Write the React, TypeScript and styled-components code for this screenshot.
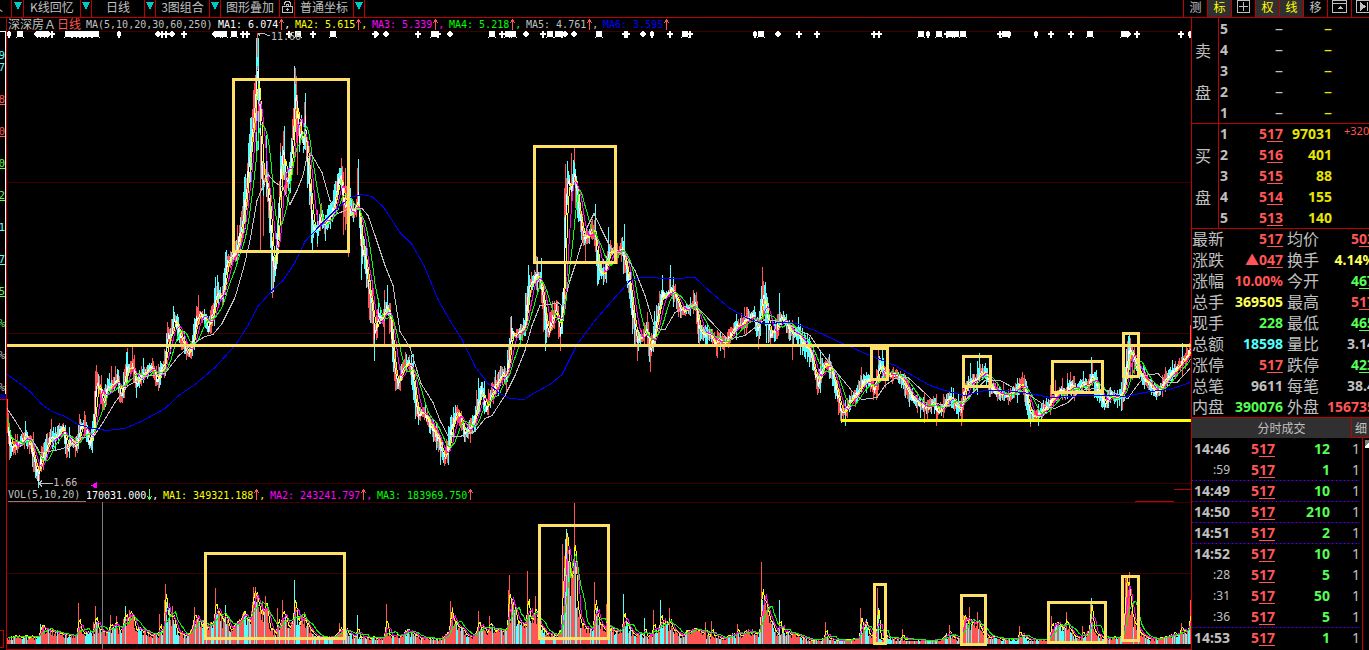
import React from "react";
import styled, { createGlobalStyle, css } from "styled-components";

const C = {
  line: "#c00000",
  grid: "#400000",
  gray: "#c0c0c0",
  red: "#ff5555",
  cyan: "#55ffff",
  green: "#55ff55",
  lime: "#00ff00",
  yellow: "#ffff00",
  lemon: "#ffff55",
  magenta: "#ff00ff",
  blue: "#0000ff",
  white: "#ffffff",
  note: "#ffe066",
};

const cjk = `"Noto Sans CJK SC", sans-serif`;
const digits = `"Noto Sans", "Noto Sans CJK SC", sans-serif`;
const mono = `"DejaVu Sans Mono", "Noto Sans CJK SC", monospace`;

const Global = createGlobalStyle`
  *, *::before, *::after { box-sizing: border-box; }
  body { margin: 0; background: #000; color: ${C.gray}; font-family: ${cjk}; overflow: hidden; }
  button { font: inherit; color: inherit; background: none; border: 0; padding: 0; margin: 0; }
`;

/* ---------- layout ---------- */

const Page = styled.div`
  display: flex;
  flex-direction: column;
  height: 100vh;
  background: #000;
`;

const Toolbar = styled.header`
  display: flex;
  justify-content: space-between;
  flex: none;
  height: 18px;
  border-bottom: 1px solid ${C.line};
  font-size: 12px;
  line-height: 14px;
`;

const ToolGroup = styled.div<{ $width?: number }>`
  display: flex;
  flex: none;
  ${(p) => p.$width && css`width: ${p.$width}px; overflow: hidden;`}
`;

const MenuButton = styled.button<{ $width: number }>`
  display: flex;
  flex: none;
  justify-content: center;
  width: ${(p) => p.$width}px;
  height: 17px;
  border-right: 1px solid ${C.line};
  white-space: nowrap;
`;

const ScrolledButton = styled(MenuButton)`
  justify-content: flex-start;
  text-indent: -9px;
`;

const ArrowButton = styled(MenuButton)`
  padding-top: 2px;
  svg { display: block; }
`;

const ToggleButton = styled.button<{ $on?: boolean }>`
  display: flex;
  flex: none;
  justify-content: center;
  width: 24px;
  height: 17px;
  border-left: 1px solid ${C.line};
  color: ${(p) => (p.$on ? C.yellow : C.gray)};
  background: ${(p) => (p.$on ? "#303030" : "#000")};
`;

const Main = styled.main`
  display: flex;
  flex: 1;
  min-height: 0;
`;

const Axis = styled.aside`
  display: flex;
  flex-direction: column;
  flex: none;
  width: 7px;
  padding-top: 13px;
  border-right: 1px solid ${C.line};
`;

const Scale = styled.div`
  flex: none;
  width: 6px;
  height: 363px;
  padding-top: 17px;
  border-top: 1px solid ${C.white};
  border-right: 1px solid ${C.white};
  overflow: hidden;
`;

const ScaleMark = styled.div<{ $color: string; $tall?: boolean; $line?: boolean }>`
  display: flex;
  justify-content: flex-end;
  height: ${(p) => (p.$tall ? 32 : 12)}px;
  font: 11px/14px ${mono};
  color: ${(p) => p.$color};
  text-decoration: ${(p) => (p.$line ? "underline" : "none")};
`;

const ScaleGap = styled.div`
  height: 20px;
`;

const ScaleEnd = styled.div`
  width: 6px;
  height: 6px;
  background: #000080;
  border-bottom: 1px solid ${C.line};
`;

const AxisFoot = styled.div`
  width: 4px;
  height: 18px;
  margin: auto 0 2px;
  border: 1px solid ${C.line};
  border-left: 0;
`;

const Charts = styled.section`
  display: flex;
  flex-direction: column;
  flex: 1;
  min-width: 0;
`;

const Legend = styled.div<{ $height: number }>`
  display: flex;
  flex: none;
  height: ${(p) => p.$height}px;
  padding-left: 1px;
  font: 10px/13px ${mono};
  white-space: pre;
`;

const StockName = styled.span<{ $color?: string; $width: number }>`
  flex: none;
  width: ${(p) => p.$width}px;
  font: 12px/12px ${cjk};
  color: ${(p) => p.$color ?? C.gray};
`;

const LegendItem = styled.span<{ $color: string; $width: number; $low?: boolean }>`
  display: flex;
  flex: none;
  width: ${(p) => p.$width}px;
  line-height: ${(p) => (p.$low ? 15 : 13)}px;
  color: ${(p) => p.$color};
`;

const TrendMark = styled.svg`
  flex: none;
  display: block;
  width: 6px;
  height: 12px;
  margin-top: 1px;
`;

const VolLabel = styled.span`
  flex: none;
  width: 78px;
  border-bottom: 1px solid #808080;
  line-height: 13px;
`;

const Pane = styled.div<{ $grow: number }>`
  position: relative;
  flex: ${(p) => p.$grow} 1 0;
  min-height: 0;
  svg.plot { display: block; width: 100%; height: 100%; }
`;

const Callout = styled.span<{ $left: string; $top: string }>`
  position: absolute;
  left: ${(p) => p.$left};
  top: ${(p) => p.$top};
  display: flex;
  align-items: center;
  font: 10px/12px ${mono};
  color: ${C.gray};
`;

/* ---------- side panel ---------- */

const Side = styled.aside`
  display: flex;
  flex-direction: column;
  flex: none;
  width: 178px;
  border-left: 1px solid ${C.line};
  overflow: hidden;
`;

const Block = styled.section`
  display: flex;
  flex: none;
  box-shadow: 0 1px 0 ${C.line};
`;

const BookLabel = styled.div`
  display: flex;
  flex-direction: column;
  justify-content: center;
  gap: 18px;
  flex: none;
  width: 27px;
  padding-left: 3px;
  border-right: 1px solid ${C.line};
  font-size: 16px;
  line-height: 24px;
`;

const Table = styled.table`
  flex: none;
  table-layout: fixed;
  border-collapse: collapse;
  font: bold 14px/21px ${digits};
  td, th { padding: 0; height: 21px; white-space: nowrap; }
`;

const Num = styled.td<{ $color?: string; $width: number; $thin?: boolean }>`
  width: ${(p) => p.$width}px;
  color: ${(p) => p.$color ?? C.gray};
  text-align: right;
  ${(p) => p.$thin && css`font-weight: normal;`}
  u { text-decoration-thickness: 1px; text-underline-offset: 2px; }
`;

const Dash = styled(Num)`
  font-size: 16px;
`;

const Level = styled.th<{ $width: number }>`
  width: ${(p) => p.$width}px;
  padding-left: 1px !important;
  text-align: left;
`;

const Delta = styled.td`
  width: 50px;
  padding-left: 12px !important;
  font: 11px/16px ${digits};
  vertical-align: top;
  color: ${C.red};
`;

const Name = styled.th<{ $indent?: boolean }>`
  width: ${(p) => (p.$indent ? 36 : 32)}px;
  padding-left: ${(p) => (p.$indent ? 4 : 0)}px !important;
  font: 16px/21px ${cjk};
  text-align: left;
`;

const TickHead = styled.div`
  display: flex;
  flex: none;
  height: 21px;
  border-top: 1px solid ${C.line};
  background: #303030;
  font-size: 12px;
  line-height: 19px;
`;

const TickTitle = styled.h2`
  flex: 1;
  margin: 0;
  padding-left: 20px;
  font-size: 12px;
  font-weight: normal;
  text-align: center;
`;

const DetailButton = styled.button`
  width: 18px;
  padding-left: 3px;
  border-left: 1px solid ${C.line};
  border-bottom: 1px solid ${C.line};
  text-align: left;
`;

const TickBody = styled.div`
  display: flex;
  flex: 1;
  min-height: 0;
  overflow: hidden;
`;

const TickRow = styled.tr<{ $rule?: boolean }>`
  ${(p) =>
    p.$rule &&
    css`
      background: repeating-linear-gradient(90deg, ${C.line} 0 1px, #0000a0 1px 4px) top / 100% 1px no-repeat;
    `}
`;

const Time = styled.td<{ $minor?: boolean }>`
  width: 38px;
  text-align: right;
  ${(p) => p.$minor && css`font-weight: normal; font-size: 12px;`}
`;

const Scroll = styled.div`
  flex: none;
  width: 7px;
  margin-left: 2px;
  padding: 2px 0 0 2px;
  border-left: 1px solid ${C.line};
  &::before { content: ""; display: block; height: 8px; background: linear-gradient(135deg, #808080 50%, #fff 50%); }
`;

/* ---------- chart data ---------- */

type Pt = [number, number];

const parse = (s: string): Pt[] =>
  s.trim().split(/\s+/).map((p) => p.split(",").map(Number) as Pt);

const sample = (pts: Pt[], x: number) => {
  for (let i = 1; i < pts.length; i++) {
    if (x <= pts[i][0]) {
      const [a, b] = [pts[i - 1], pts[i]];
      return a[1] + ((b[1] - a[1]) * (x - a[0])) / (b[0] - a[0]);
    }
  }
  return pts[pts.length - 1][1];
};

const random = (seed: number) => () => {
  seed = (seed * 1664525 + 1013904223) % 4294967296;
  return seed / 4294967296;
};

const X0 = 7;
const X1 = 1191;

const price = parse(`
7,420 9,440 11,450 15,445 20,444 25,436 30,445 33,455 35,468 38,478 40,462 45,450 50,437 55,438 60,430 63,428
67,450 70,440 76,446 80,427 85,425 89,445 93,432 96,380 100,390 103,405 107,388 112,385 117,378 121,397 126,370
132,366 136,384 141,376 147,370 152,368 157,382 161,370 165,362 167,335 170,338 174,318 178,330 183,343 188,355
193,340 196,320 200,315 205,318 208,330 212,315 217,292 222,298 226,265 230,260 235,252 240,234 245,200 249,155
252,128 255,100 257,62 259,100 261,170 263,190 265,175 268,195 271,240 273,270 275,265 277,240 280,175 283,145
286,185 290,170 293,125 295,90 297,112 299,140 301,125 303,150 305,120 307,165 310,195 312,230 315,228 318,230
321,213 324,228 328,217 332,212 336,192 340,172 344,205 346,202 348,228 350,205 354,212 358,198 361,250 365,255
368,290 372,310 374,335 378,315 382,320 386,307 390,315 392,350 395,375 398,385 402,368 408,362 412,372 415,400
418,415 424,412 428,423 433,430 438,440 441,450 444,460 448,445 452,425 456,412 460,418 465,435 470,428 474,420
478,403 481,388 486,410 490,395 494,388 498,382 502,372 506,378 509,350 511,332 515,335 520,332 525,325 528,285
532,282 537,274 541,285 545,320 548,333 551,322 556,307 560,333 563,300 564,240 566,190 568,178 571,190 574,170
577,200 580,220 584,240 588,236 592,230 595,235 597,265 600,273 605,273 608,252 614,251 618,253 622,247 625,265
629,285 633,320 637,340 642,337 646,327 650,350 654,335 658,312 662,294 666,296 670,290 675,294 680,310 685,310
690,307 695,303 699,330 704,335 710,335 715,343 720,338 724,345 730,335 736,325 742,325 748,317 753,314 758,333
761,305 763,290 766,312 770,335 775,332 780,316 785,322 790,332 794,335 798,332 800,338 805,347 810,352 814,370
818,385 822,367 828,364 832,375 836,390 841,412 845,412 850,400 856,395 862,382 868,380 874,390 877,378 879,366
882,366 885,375 890,375 896,375 902,380 908,392 914,400 920,405 926,408 932,402 938,412 944,405 950,397 955,405
961,410 964,390 970,382 976,380 980,372 985,372 990,385 996,393 1002,395 1010,395 1016,390 1022,382 1026,395
1030,415 1035,415 1040,412 1046,408 1052,400 1056,395 1060,391 1065,394 1070,384 1076,390 1083,383 1088,386
1092,376 1096,385 1100,395 1105,405 1110,395 1116,398 1122,395 1126,370 1129,348 1133,357 1138,370 1143,378
1150,385 1156,392 1162,385 1168,377 1175,370 1182,362 1190,350`);

const ma5 = parse(`
7,408 15,420 25,436 32,439 40,452 55,450 70,446 80,437 93,437 103,422 115,402 128,385 145,376 165,373 178,356
190,345 205,336 213,334 222,323 235,297 244,266 250,240 257,200 262,188 268,174 275,182 283,187 290,204 297,190
303,175 307,156 312,155 322,172 330,200 338,213 350,208 362,208 368,215 375,235 385,265 393,285 400,331 410,347
421,383 433,402 440,420 448,435 460,436 475,431 485,418 492,415 505,395 515,375 525,350 532,325 540,305 550,304
558,302 563,306 570,280 575,265 580,248 588,225 594,213 602,230 612,250 625,254 635,270 645,295 655,328 665,329
675,312 685,306 695,304 710,320 728,339 745,335 765,319 785,322 800,330 810,335 820,350 835,370 855,394 862,399
877,397 885,385 895,378 908,377 920,388 935,402 945,406 955,403 965,400 975,390 985,380 1000,380 1015,388
1030,395 1045,405 1055,408 1068,402 1080,390 1095,388 1110,390 1120,396 1128,398 1135,388 1145,375 1158,373
1166,382 1177,382 1190,368`);

const ma6 = parse(`
7,374 20,383 30,391 42,404 52,411 65,416 78,424 93,428 107,430 125,428 145,419 165,408 180,394 195,384 215,367
235,345 248,325 258,306 272,290 283,280 295,262 305,241 320,225 335,210 350,197 361,194 372,196 383,206 400,232
412,244 424,265 438,299 450,320 462,339 475,366 488,383 500,393 510,398 524,399 535,392 550,384 562,374 577,344
595,320 615,297 630,280 640,277 675,278 695,277 710,291 730,308 748,318 762,323 793,322 815,330 838,341 870,355
895,365 930,385 945,390 965,395 985,390 1005,390 1030,393 1050,397 1085,395 1115,395 1125,396 1150,391 1170,389
1190,382`);

/* x, high, low, rising */
const priceSpikes: [number, number, number, boolean][] = [
  [51, 419, 440, true], [79, 414, 440, true], [95, 371, 420, true], [111, 366, 392, true], [127, 348, 376, true],
  [132, 346, 372, true], [173, 306, 325, false], [198, 295, 325, true], [217, 275, 300, false], [250, 118, 190, false],
  [251, 117, 170, false], [255, 75, 130, true], [256, 38, 160, false], [257, 33, 70, true], [258, 38, 150, false],
  [260, 110, 250, true], [263, 150, 236, true], [266, 135, 190, false], [272, 240, 298, true], [271, 230, 293, false],
  [280, 143, 200, true], [283, 131, 180, true], [284, 126, 180, false], [291, 145, 180, false], [294, 66, 140, false],
  [295, 68, 120, true], [296, 76, 140, true], [297, 95, 175, true], [304, 102, 145, true], [305, 93, 150, false],
  [311, 190, 243, false], [312, 210, 248, false], [317, 210, 247, true], [325, 215, 241, false], [341, 158, 190, true],
  [343, 172, 235, true], [345, 168, 230, true], [348, 180, 257, true], [357, 168, 210, true], [358, 159, 210, false],
  [361, 220, 280, false], [374, 325, 361, false], [384, 290, 346, true], [387, 285, 310, false], [444, 450, 466, true],
  [478, 378, 410, false], [481, 382, 400, false], [502, 367, 385, true], [510, 317, 345, true], [528, 265, 300, false],
  [536, 256, 290, true], [537, 257, 295, false], [541, 258, 290, false], [545, 310, 351, false], [560, 330, 351, true],
  [564, 188, 300, true], [565, 164, 240, true], [567, 176, 205, false], [571, 153, 200, true], [573, 160, 190, false],
  [574, 148, 185, true], [575, 182, 208, true], [585, 240, 261, true], [595, 204, 240, false], [597, 250, 285, false],
  [608, 227, 258, false], [621, 238, 262, true], [624, 224, 260, false], [637, 330, 361, true], [650, 340, 372, true],
  [654, 311, 345, false], [662, 275, 300, false], [670, 265, 292, false], [694, 293, 310, false], [698, 310, 343, false],
  [762, 267, 310, true], [763, 281, 320, true], [766, 293, 343, false], [779, 293, 325, false], [792, 320, 360, true],
  [817, 375, 395, true], [861, 367, 384, true], [878, 350, 390, true], [882, 349, 380, false], [970, 363, 385, false],
  [979, 353, 382, false], [1030, 400, 427, true], [1055, 380, 400, true], [1067, 373, 392, true], [1083, 371, 388, false],
  [1091, 357, 384, false], [1092, 362, 386, true], [1128, 336, 380, false], [1129, 334, 370, false], [1130, 338, 375, true],
  [1132, 345, 380, true], [1182, 343, 365, false], [1190, 325, 352, true],
];

const volume = parse(`
7,6 30,6 38,6 40,17 45,13 52,12 60,10 75,6 79,16 88,8 93,12 96,18 100,12 108,10 113,14 120,13 125,24 132,24 138,12
146,12 150,9 158,8 163,12 165,34 170,24 178,9 188,7 194,20 200,22 206,12 212,20 218,25 224,22 230,14 238,18 244,24
250,28 256,36 260,32 266,30 270,16 276,10 284,22 290,20 295,26 302,22 308,15 314,6 330,6 345,12 352,7 370,5 383,5
386,14 390,8 400,8 408,12 418,5 440,4 447,10 450,20 456,18 462,12 468,5 474,8 480,16 488,12 496,16 504,12 508,18
512,34 518,20 524,15 530,28 538,20 545,10 556,7 562,18 564,60 566,90 570,55 574,62 577,40 580,20 585,14 592,16
596,28 600,18 606,12 612,12 620,11 626,18 632,10 640,8 650,7 660,16 664,20 670,14 680,8 690,12 698,10 710,6 716,8
722,4 732,8 740,8 750,12 758,8 761,28 765,40 770,20 776,10 784,12 790,9 800,6 812,2 825,6 833,3 845,2 860,5 866,22
868,10 878,4 890,6 900,3 930,2 940,3 946,8 952,6 960,4 963,26 970,18 978,20 984,10 990,6 1000,4 1015,4 1020,8 1028,3
1048,3 1052,20 1060,16 1068,14 1076,5 1086,6 1091,25 1096,8 1105,4 1112,5 1122,8 1126,40 1130,34 1134,18 1140,10
1150,4 1165,6 1175,9 1190,14`);

const volumeSpikes: [number, number, boolean][] = [
  [78, 41, true], [93, 22, true], [95, 38, true], [110, 29, true], [116, 28, true], [125, 38, false], [131, 26, true],
  [159, 30, true], [164, 44, true], [165, 60, true], [172, 38, true], [194, 37, true], [215, 56, true], [225, 39, false],
  [243, 32, true], [253, 57, true], [255, 57, true], [265, 48, true], [282, 44, true], [277, 36, true], [294, 64, false],
  [295, 37, true], [304, 32, true], [339, 21, true], [357, 29, false], [386, 40, true], [450, 43, true], [452, 37, true],
  [478, 33, true], [489, 28, true], [508, 54, true], [509, 69, true], [515, 40, true], [527, 73, true], [535, 48, true],
  [562, 100, true], [565, 105, false], [564, 88, true], [571, 75, true], [574, 141, true], [575, 82, false],
  [594, 62, true], [606, 40, true], [623, 50, false], [644, 26, false], [653, 34, true], [660, 44, false], [669, 36, true],
  [711, 23, true], [761, 82, true], [762, 44, false], [779, 44, false], [705, 22, true], [737, 20, true], [825, 22, true],
  [860, 36, true], [861, 26, false], [877, 56, true], [878, 36, false], [902, 15, true], [949, 19, true], [963, 29, true],
  [969, 37, true], [977, 32, true], [1019, 18, true], [1051, 28, true], [1066, 32, true], [1082, 18, true],
  [1090, 42, true], [1091, 46, false], [1125, 66, true], [1126, 66, true], [1127, 62, true], [1129, 72, true],
  [1181, 21, true], [1189, 22, false], [1190, 44, true],
];

const average = (values: number[], n: number) =>
  values.map((_, i) => {
    const part = values.slice(Math.max(0, i - n + 1), i + 1);
    return part.reduce((a, b) => a + b, 0) / part.length;
  });

const linePath = (values: number[]) =>
  values.map((v, i) => `${i ? "L" : "M"}${X0 + i + 0.5} ${v.toFixed(1)}`).join("");

const ptsPath = (pts: Pt[]) => pts.map(([x, y], i) => `${i ? "L" : "M"}${x} ${y + 0.5}`).join("");

const bar = (x: number, top: number, bottom: number) =>
  `M${x + 0.5} ${top.toFixed(0)}V${bottom.toFixed(0)}`;

const buildPrice = () => {
  const rnd = random(17);
  const closes: number[] = [];
  let up = "";
  let down = "";
  let body = "";
  let rising = true;
  for (let x = X0; x < X1; x++) {
    const mid = sample(price, x);
    const slope = Math.abs(sample(price, x + 2) - sample(price, x - 2));
    const reach = 4 + Math.min(slope * 0.4, 12);
    const wild = rnd() > 0.75 ? 9 : 0;
    const high = mid - reach * (0.5 + rnd()) - wild * rnd();
    const low = mid + reach * (0.5 + rnd()) + wild * rnd();
    if (rnd() > 0.6) rising = !rising;
    if (rising) up += bar(x, high, low);
    else down += bar(x, high, low);
    if (rnd() > 0.75) body += bar(x, mid - reach * 0.4, mid + reach * 0.4);
    closes.push(mid + (rnd() - 0.5) * 6);
  }
  priceSpikes.forEach(([x, a, b, r]) => {
    if (r) up += bar(x, a, b);
    else down += bar(x, a, b);
  });
  return { up, down, body, closes };
};

const BASE = 644;

const buildVolume = () => {
  const rnd = random(91);
  const heights: number[] = [];
  const colors: boolean[] = [];
  let rising = true;
  for (let x = X0; x < X1; x++) {
    if (rnd() > (rising ? 0.7 : 0.45)) rising = !rising;
    heights.push(Math.max(3, sample(volume, x) * (0.7 + rnd() * 0.7)));
    colors.push(rising);
  }
  volumeSpikes.forEach(([x, h, r]) => {
    heights[x - X0] = h;
    colors[x - X0] = r;
  });
  let up = "";
  let down = "";
  heights.forEach((h, i) => {
    if (colors[i]) up += bar(X0 + i, BASE - h, BASE);
    else down += bar(X0 + i, BASE - h, BASE);
  });
  const line = (n: number) => linePath(average(heights, n).map((h) => BASE - h - 1));
  return { up, down, fast: line(3), mid: line(6), slow: line(12) };
};

const P = buildPrice();
const V = buildVolume();

/* event markers: p plus, d diamond, b burst, n narrow diamond */
const events = `9n 20b 37d 41b 44b 48d 52p 68b 72n 76b 80b 84b 88b 92n 96b 119n 158d 162p 166p 172d 184p 215d 219b 224b
234b 243p 247p 289p 298b 313p 333b 375p 376d 386d 418p 434b 438p 450d 492b 502p 508b 513b 526d 543p 550b 558b 562n
565d 574d 599b 625p 627p 643d 652n 670p 685b 690p 755n 761b 778d 799p 817p 874p 879p 921b 928n 939b 947p 951b 956b
963b 1000p 1005b 1009n 1036n 1051p 1071p 1090b 1124b 1128d 1137p 1181p 1190n`.split(/\s+/);

const glyphs: Record<string, string> = {
  p: "M-1 -4h2v3h2v2h-2v3h-2v-3h-2v-2h2z",
  d: "M-1 -3h2v1h1v1h1v2h-1v1h-1v1h-2v-1h-1v-1h-1v-2h1v-1h1z",
  n: "M-1 -4h2v2h1v4h-1v2h-2v-2h-1v-4h1z",
  b: "M-2 -2h4v4h-4zM-4 -4h1v1h-1zM-1 -3h2v6h-2zM3 -4h1v1h-1zM-3 -1h6v2h-6zM-4 3h1v1h-1zM3 3h1v1h-1zM-3 -3h6v6h-6z",
};

const Boxes = ({ items }: { items: [number, number, number, number][] }) => (
  <g fill="none" stroke={C.note} strokeWidth="3" strokeLinejoin="round">
    {items.map(([a, b, c, d]) => (
      <rect key={a} x={a + 1.5} y={b + 1.5} width={c - a - 3} height={d - b - 3} />
    ))}
  </g>
);

const PricePlot = () => (
  <svg className="plot" viewBox="7 31 1184 457" preserveAspectRatio="none" shapeRendering="crispEdges" fill="none">
    <path d="M7 31.5H1191M7 182.5H1191M7 333.5H1191M7 483.5H1191" stroke={C.grid} />
    <path d={P.up} stroke={C.red} />
    <path d={P.down} stroke={C.cyan} />
    <path d={P.body} stroke={C.white} />
    <path d={linePath(average(P.closes, 2))} stroke={C.white} />
    <path d={linePath(average(P.closes, 5))} stroke={C.yellow} />
    <path d={linePath(average(P.closes, 9))} stroke={C.magenta} />
    <path d={linePath(average(P.closes, 15))} stroke={C.lime} />
    <path d={ptsPath(ma5)} stroke={C.gray} />
    <path d={ptsPath(ma6)} stroke={C.blue} />
    <g fill={C.white}>
      {events.map((e) => (
        <path key={e} d={glyphs[e.slice(-1)]} transform={`translate(${parseInt(e, 10)} 34)`} />
      ))}
    </g>
    <path d="M258 33l4 0M258 33l2 3M262 33l8 3M39 483.5h14M39 483.5l3 -3M39 483.5l3 3" stroke={C.gray} />
    <path d="M91 485.5l6 -4v8z" fill={C.magenta} />
    <path d="M7 345.5H1191" stroke={C.note} strokeWidth="3" />
    <path d="M841 420.5H1191" stroke={C.yellow} strokeWidth="3" />
    <Boxes
      items={[
        [232, 78, 350, 253], [533, 145, 617, 264], [870, 347, 889, 381],
        [962, 355, 992, 388], [1051, 360, 1104, 394], [1122, 332, 1140, 378],
      ]}
    />
  </svg>
);

const VolumePlot = () => (
  <svg className="plot" viewBox="7 502 1184 148" preserveAspectRatio="none" shapeRendering="crispEdges" fill="none">
    <path d="M7 502.5H1191M7 573.5H1191" stroke={C.grid} />
    <path d={V.up} stroke={C.red} />
    <path d={V.down} stroke={C.cyan} />
    <path d={V.fast} stroke={C.yellow} />
    <path d={V.mid} stroke={C.magenta} />
    <path d={V.slow} stroke={C.lime} />
    <path d="M102.5 502V649" stroke="#808080" />
    <path d="M7 649.5H1191" stroke={C.line} />
    <Boxes
      items={[
        [204, 552, 346, 640], [538, 524, 610, 640], [873, 583, 887, 645],
        [960, 594, 987, 646], [1047, 601, 1107, 644], [1121, 575, 1140, 642],
      ]}
    />
  </svg>
);

/* right end of the volume legend row: the tab edge */
const TabEdge = styled.svg`
  display: block;
  flex: none;
  width: 56px;
  height: 14px;
  margin-left: auto;
`;

/* ---------- panel data ---------- */

const asks = ["5", "4", "3", "2", "1"];
const bids = [
  ["1", "517", "97031", "+3203"], ["2", "516", "401"], ["3", "515", "88"], ["4", "514", "155"], ["5", "513", "140"],
];

/* a trailing underscore marks prices whose last two digits are underlined */
const stats: [string, string, string, string, string, string][] = [
  ["最新", "517_", C.red, "均价", "503_", C.red],
  ["涨跌", "▲047_", C.red, "换手", "4.14%", C.lemon],
  ["涨幅", "10.00%", C.red, "今开", "467_", C.green],
  ["总手", "369505", C.lemon, "最高", "517_", C.red],
  ["现手", "228", C.green, "最低", "465_", C.green],
  ["总额", "18598", C.cyan, "量比", "3.14", C.gray],
  ["涨停", "517_", C.red, "跌停", "423_", C.green],
  ["总笔", "9611", C.gray, "每笔", "38.4", C.gray],
  ["内盘", "390076", C.green, "外盘", "156735", C.red],
];

const ticks = [
  ["14:46", "12"], [":59", "1"], ["14:49", "10"], ["14:50", "210"], ["14:51", "2"],
  ["14:52", "10"], [":28", "5"], [":31", "50"], [":36", "5"], ["14:53", "1"],
];

const Value = ({ text }: { text: string }) => {
  if (!text.endsWith("_")) return <>{text}</>;
  const t = text.slice(0, -1);
  return (
    <>
      {t.slice(0, -2)}
      <u>{t.slice(-2)}</u>
    </>
  );
};

const averages: [string, string][] = [
  ["MA1: 6.074", C.white], ["MA2: 5.615", C.yellow], ["MA3: 5.339", C.magenta],
  ["MA4: 5.218", C.lime], ["MA5: 4.761", C.gray], ["MA6: 3.595", C.blue],
];

const volAverages: [string, string][] = [
  ["MA1: 349321.188", C.yellow], ["MA2: 243241.797", C.magenta], ["MA3: 183969.750", C.lime],
];

const scale: [string, string, boolean][] = [
  ["8", C.red, true], ["0", C.red, true], ["0", C.green, true], ["2", C.green, true], ["1", C.cyan, false],
  ["7", C.cyan, true], ["5", C.green, true], ["%", C.green, false], ["%", C.gray, false], ["%", C.gray, false],
];

const Trend = ({ down }: { down?: boolean }) => (
  <TrendMark viewBox="0 0 6 12" shapeRendering="crispEdges" role="img" aria-label={down ? "下降" : "上升"}>
    {down ? (
      <path d="M3 0h1v11h-1zM1 7h1v1h-1zM2 8h3v2h-3zM5 7h1v1h-1z" fill={C.green} />
    ) : (
      <path d="M3 0h1v11h-1zM2 1h3v2h-3zM1 3h1v1h-1zM5 3h1v1h-1z" fill={C.red} />
    )}
  </TrendMark>
);

const Drop = ({ label, width = 11 }: { label: string; width?: number }) => (
  <ArrowButton $width={width} aria-label={label}>
    <svg width="8" height="8" shapeRendering="crispEdges">
      <path d="M0 0h8v1h-1v2h-1v2h-1v2h-2v-2h-1v-2h-1v-2h-1z" fill="#00c8c8" />
    </svg>
  </ArrowButton>
);

export default function App() {
  return (
    <Page>
      <Global />
      <Toolbar>
        <ToolGroup>
          <ScrolledButton $width={12}>人</ScrolledButton>
          <Drop label="更多" width={12} />
          <MenuButton $width={57}>K线回忆</MenuButton>
          <Drop label="回忆选项" />
          <MenuButton $width={53}>日线</MenuButton>
          <Drop label="周期选项" />
          <MenuButton $width={54}>3图组合</MenuButton>
          <Drop label="组合选项" />
          <MenuButton $width={59}>图形叠加</MenuButton>
          <MenuButton $width={15} aria-label="锁定">
            <svg width="13" height="14" shapeRendering="crispEdges" fill="none" stroke={C.gray}>
              <path d="M1.5 6.5h10v6h-10zM3.5 4.500v-2h1v-1h4v1h1v4M5.5 6v-2h2v2M6.5 8v3M5 9.5h3" />
            </svg>
          </MenuButton>
          <MenuButton $width={59}>普通坐标</MenuButton>
          <Drop label="坐标选项" />
        </ToolGroup>
        <ToolGroup $width={186}>
          <ToggleButton>测</ToggleButton>
          <ToggleButton $on>标</ToggleButton>
          <ToggleButton aria-label="网格">
            <svg width="15" height="14" fill="none" stroke={C.gray} shapeRendering="crispEdges">
              <path d="M1.5 .5h12v12h-12zM3 6.5h9M7.5 2v9" />
            </svg>
          </ToggleButton>
          <ToggleButton $on>权</ToggleButton>
          <ToggleButton $on>线</ToggleButton>
          <ToggleButton>移</ToggleButton>
          <ToggleButton aria-label="展开">
            <svg width="15" height="14" fill="none" stroke={C.gray} shapeRendering="crispEdges">
              <path d="M.5 .5h14v12h-14zM1 3.5h13" />
              <path d="M5 9l3 -3l3 3z" fill={C.gray} stroke="none" />
            </svg>
          </ToggleButton>
          <ToggleButton aria-label="下一个">
            <svg width="15" height="14" fill="none" stroke={C.gray} shapeRendering="crispEdges">
              <path d="M.5 .5h14v12h-14zM11.5 2v9" />
              <path d="M4 2l6 4.500l-6 4.500z" fill={C.gray} stroke="none" />
            </svg>
          </ToggleButton>
        </ToolGroup>
      </Toolbar>

      <Main>
        <Axis>
          <Scale>
            <ScaleMark $color={C.cyan}>9</ScaleMark>
            <ScaleMark $color={C.cyan}>7</ScaleMark>
            <ScaleGap />
            {scale.map(([t, color, line], i) => (
              <ScaleMark key={i} $tall $color={color} $line={line}>
                {t}
              </ScaleMark>
            ))}
          </Scale>
          <ScaleEnd />
          <AxisFoot />
        </Axis>

        <Charts>
          <Legend $height={13}>
            <StockName $width={49}>深深房Ａ</StockName>
            <StockName $width={29} $color={C.red}>日线</StockName>
            <LegendItem $width={132} $color={C.gray}>MA(5,10,20,30,60,250)</LegendItem>
            {averages.map(([t, color], i) => (
              <LegendItem key={t} $width={77} $color={color}>
                {t}
                <Trend />
                {i < averages.length - 1 && ","}
              </LegendItem>
            ))}
          </Legend>
          <Pane $grow={457}>
            <PricePlot />
            <Callout $left="22.3%" $top="0">11.66</Callout>
            <Callout $left="3.9%" $top="97.5%">1.66</Callout>
          </Pane>
          <Legend $height={14}>
            <VolLabel>VOL(5,10,20)</VolLabel>
            <LegendItem $low $width={77} $color={C.white}>
              170031.000<Trend down />,
            </LegendItem>
            {volAverages.map(([t, color], i) => (
              <LegendItem key={t} $low $width={107} $color={color}>
                {t}
                <Trend />
                {i < volAverages.length - 1 && ","}
              </LegendItem>
            ))}
            <TabEdge viewBox="0 0 56 14" shapeRendering="crispEdges" fill="none">
              <path d="M39 1.5H56M0 13.5H39" stroke={C.line} />
            </TabEdge>
          </Legend>
          <Pane $grow={148}>
            <VolumePlot />
          </Pane>
        </Charts>

        <Side>
          <Block>
            <BookLabel>
              <span>卖</span>
              <span>盘</span>
            </BookLabel>
            <Table>
              <tbody>
                {asks.map((n) => (
                  <tr key={n}>
                    <Level $width={16}>{n}</Level>
                    <Dash $width={48} $thin>–</Dash>
                    <Dash $width={49} $thin $color="#e6e600">–</Dash>
                  </tr>
                ))}
              </tbody>
            </Table>
          </Block>
          <Block>
            <BookLabel>
              <span>买</span>
              <span>盘</span>
            </BookLabel>
            <Table>
              <tbody>
                {bids.map(([n, p, q, d]) => (
                  <tr key={n}>
                    <Level $width={16}>{n}</Level>
                    <Num $width={48} $color={C.red}>
                      <Value text={p + "_"} />
                    </Num>
                    <Num $width={49} $color="#e6e600">{q}</Num>
                    <Delta>{d}</Delta>
                  </tr>
                ))}
              </tbody>
            </Table>
          </Block>
          <Block>
            <Table>
              <tbody>
                {stats.map(([a, av, ac, b, bv, bc]) => (
                  <tr key={a}>
                    <Name>{a}</Name>
                    <Num $width={59} $color={ac}>
                      <Value text={av} />
                    </Num>
                    <Name $indent>{b}</Name>
                    <Num $width={56} $color={bc}>
                      <Value text={bv} />
                    </Num>
                  </tr>
                ))}
              </tbody>
            </Table>
          </Block>
          <TickHead>
            <TickTitle>分时成交</TickTitle>
            <DetailButton>细</DetailButton>
          </TickHead>
          <TickBody>
            <div>
              <Table>
                <tbody>
                  {ticks.map(([t, q], i) => (
                    <TickRow key={t} $rule={i > 0 && !t.startsWith(":")}>
                      <Time $minor={t.startsWith(":")}>{t}</Time>
                      <Num $width={45} $color={C.red}>
                        <Value text="517_" />
                      </Num>
                      <Num $width={55} $color={C.green}>{q}</Num>
                      <Num $width={30} $thin>1</Num>
                    </TickRow>
                  ))}
                </tbody>
              </Table>
            </div>
            <Scroll />
          </TickBody>
        </Side>
      </Main>
    </Page>
  );
}
